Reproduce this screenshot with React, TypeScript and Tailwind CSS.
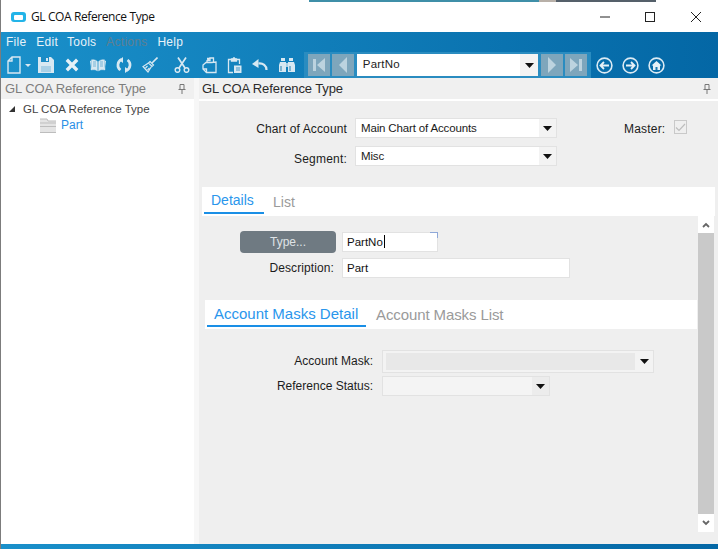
import type { ReactNode } from 'react';

const Caret = () => (
  <svg width="9" height="5" viewBox="0 0 9 5" className="block">
    <path d="M0 0h9L4.5 5z" fill="#111" />
  </svg>
);

const Select = ({ value, className }: { value: string; className: string }) => (
  <div className={`flex h-[20px] items-stretch border border-[#e2e2e2] bg-white ${className}`}>
    <span className="flex-1 pl-[5px] text-[11.5px] leading-[18px] tracking-[-0.15px] text-[#1a1a1a]">{value}</span>
    <span className="flex w-[17px] items-center justify-center bg-[#f3f3f3]">
      <Caret />
    </span>
  </div>
);

const Label = ({ children, className }: { children: ReactNode; className: string }) => (
  <span className={`text-right text-[12px] leading-[16px] text-[#1c1c1c] ${className}`}>{children}</span>
);

const Tool = ({ children, className }: { children: ReactNode; className: string }) => (
  <span className={`flex h-[26px] items-center justify-center ${className}`}>{children}</span>
);

const NavButton = ({ children }: { children: ReactNode }) => (
  <span className="flex h-[22px] w-[22px] items-center justify-center bg-[#7ea6bc]">{children}</span>
);

const CircleIcon = ({ children }: { children: ReactNode }) => (
  <svg width="17" height="17" viewBox="0 0 17 17" className="block">
    <circle cx="8.5" cy="8.5" r="7.4" fill="none" stroke="#dcebf4" strokeWidth="1.6" />
    {children}
  </svg>
);

const c = '#d7e8f2';

export default function App() {
  return (
    <div className="flex h-[549px] w-[718px] flex-col overflow-hidden border-l border-[#7c7c7c] bg-white font-['Liberation_Sans',Arial,sans-serif]">
      {/* sliver of whatever sits behind the window */}
      <div className="flex h-[2px] bg-white">
        <span className="ml-[308px] w-[230px] bg-[#3f8fa8]" />
        <span className="w-[17px] bg-[#b8b0a8]" />
        <span className="w-[100px] bg-[#55606a]" />
      </div>

      {/* title bar */}
      <div className="flex h-[30px] items-center">
        <span className="ml-[10px] flex h-[10px] w-[15px] items-center justify-center rounded-[3px] bg-[#23b4e8]">
          <span className="h-[5px] w-[9px] rounded-[1px] bg-white" />
        </span>
        <span className="ml-[5px] font-['Open_Sans',sans-serif] text-[12px] tracking-[-0.4px] text-[#111]">GL COA Reference Type</span>
        <span className="ml-auto flex items-center">
          <svg width="10" height="2" className="mr-[35px]"><path d="M0 1h10" stroke="#222" /></svg>
          <svg width="10" height="10" className="mr-[35px]"><rect x=".5" y=".5" width="9" height="9" fill="none" stroke="#222" /></svg>
          <svg width="12" height="12" className="mr-[16px]"><path d="M1 1l10 10M11 1L1 11" stroke="#222" /></svg>
        </span>
      </div>

      {/* menu + toolbar */}
      <div className="h-[46px] bg-gradient-to-r from-[#1a90ca] to-[#0467a5]">
        <div className="flex h-[20px] items-center pl-[5px] text-[12px] tracking-[0.25px] text-[#e8f2f8]">
          <span>File</span>
          <span className="ml-[10px]">Edit</span>
          <span className="ml-[9px]">Tools</span>
          <span className="ml-[10px] text-[#5f7f92]">Actions</span>
          <span className="ml-[10px]">Help</span>
        </div>
        <div className="flex h-[26px] items-center">
          <Tool className="ml-[4px] w-[18px]">
            <svg width="14" height="18" viewBox="0 0 14 18"><path d="M5 1h8v16H1V5z M5 1v4H1" fill="none" stroke={c} strokeWidth="1.4" /></svg>
          </Tool>
          <Tool className="w-[10px]">
            <svg width="6" height="3"><path d="M0 0h6L3 3z" fill={c} /></svg>
          </Tool>
          <Tool className="w-[26px]">
            <svg width="16" height="16" viewBox="0 0 16 16"><path d="M0 0h13l3 3v13H0z" fill={c} /><path d="M3 0h8v5H3z" fill="#1a8ac4" /><path d="M8 1h2v3H8z" fill={c} /><path d="M3 9h10v6H3z" fill="#a9d0e6" /></svg>
          </Tool>
          <Tool className="w-[26px]">
            <svg width="14" height="14" viewBox="0 0 14 14"><path d="M1.8 1.8l10.4 10.4M12.2 1.8L1.8 12.2" stroke="#e6f1f7" strokeWidth="3.4" /></svg>
          </Tool>
          <Tool className="w-[26px]">
            <svg width="16" height="13" viewBox="0 0 16 13"><path d="M0 2h1v9c3-.6 5-.3 6.400 1V2.500C6 .8 3 .4 1.500.8V10M16 2h-1v9c-3-.6-5-.3-6.400 1V2.500C10 .8 13 .4 14.500.8V10" fill={c} stroke={c} strokeWidth=".4" /><path d="M3 3h3M3 5h3M3 7h3M10 3h3M10 5h3M10 7h3" stroke="#4a9fcb" strokeWidth=".7" /></svg>
          </Tool>
          <Tool className="w-[26px]">
            <svg width="16" height="16" viewBox="0 0 16 16" fill="none" stroke={c} strokeWidth="2.700"><path d="M5.500 2.600A6 6 0 0 0 4.500 13" /><path d="M10.500 13.400A6 6 0 0 0 11.500 3" /><path d="M7 0v6L3 3z M9 16v-6l4 3z" fill={c} stroke="none" /></svg>
          </Tool>
          <Tool className="w-[26px]">
            <svg width="16" height="16" viewBox="0 0 16 16" fill="none" stroke={c} strokeWidth="1.200"><path d="M15.500.5L10 6" strokeWidth="1.600" /><path d="M8 4.500l3.500 3.500-1.500 1.500-3.500-3.500z" /><path d="M6.500 6L1 9.500 6 15l3.500-5.500" /><path d="M3.500 11l2-2M5.500 13l2-2" /></svg>
          </Tool>
          <Tool className="ml-[6px] w-[26px]">
            <svg width="16" height="16" viewBox="0 0 16 16" fill="none" stroke={c} strokeWidth="1.500"><circle cx="3.500" cy="13" r="2.300" /><circle cx="12.500" cy="13" r="2.300" /><path d="M5 11L12 .5M11 11L4 .5" strokeWidth="1.700" /></svg>
          </Tool>
          <Tool className="ml-[1px] w-[26px]">
            <svg width="15" height="17" viewBox="0 0 15 17" fill="none" stroke={c} strokeWidth="1.300"><path d="M5 5V3.500L8 1h3.500v4" /><path d="M5 1.500h3M8 1v2.500H5" /><path d="M4 5.500H9.500L14 5v10.500H4.500L1 12V8z" /><path d="M1 12h3.500v3.500" /></svg>
          </Tool>
          <Tool className="w-[25px]">
            <svg width="15" height="17" viewBox="0 0 15 17" fill="none" stroke={c} strokeWidth="1.300"><path d="M4 2.500H1.500v13H6M10 2.500h2.500V7" /><path d="M4.500 4V1.800H6L7 .7l1 1.100h1.500V4z" fill={c} /><path d="M7 8.500h7.500v7.500H7z" fill={c} stroke="none" /><path d="M9 11h4M9 13h4" stroke="#1a80bb" strokeWidth=".8" /></svg>
          </Tool>
          <Tool className="w-[26px]">
            <svg width="16" height="12" viewBox="0 0 16 12" fill="none" stroke={c}><path d="M14.500 11C14.500 6.500 11 4 6.500 4.500" strokeWidth="2.200" /><path d="M0 5l6.500-5v9z" fill={c} stroke="none" /></svg>
          </Tool>
          <Tool className="ml-[1px] w-[26px]">
            <svg width="16" height="16" viewBox="0 0 16 16"><path d="M2 1h4v3H2zM10 1h4v3h-4z" fill={c} /><path d="M1 5h6v10H0V8zM9 5h6l1 3v7H9z" fill={c} /><path d="M7 6h2v4H7z" fill="#a9d0e6" /><path d="M2 9v5M11 9v5" stroke="#2680b0" strokeWidth="1" /></svg>
          </Tool>

          {/* record navigator */}
          <div className="ml-[4px] flex h-[26px] w-[287px] items-center gap-[2px] bg-[#2a8cc0] px-[4px]">
            <NavButton>
              <svg width="14" height="14" viewBox="0 0 14 14"><path d="M1 1h3v12H1zM13 0v14L5 7z" fill="#bcd3df" /></svg>
            </NavButton>
            <NavButton>
              <svg width="10" height="16" viewBox="0 0 10 16"><path d="M9 0v16L1 8z" fill="#bcd3df" /></svg>
            </NavButton>
            <div className="ml-[1px] mr-[1px] flex h-[22px] w-[182px] items-stretch bg-white">
              <span className="flex-1 pl-[6px] text-[11.5px] leading-[21px] tracking-[0.2px] text-[#222]">PartNo</span>
              <span className="flex w-[18px] items-center justify-center bg-[#f3f3f3]"><Caret /></span>
            </div>
            <NavButton>
              <svg width="10" height="16" viewBox="0 0 10 16"><path d="M1 0v16l8-8z" fill="#bcd3df" /></svg>
            </NavButton>
            <NavButton>
              <svg width="14" height="14" viewBox="0 0 14 14"><path d="M10 1h3v12h-3zM1 0v14l8-7z" fill="#bcd3df" /></svg>
            </NavButton>
          </div>
          <span className="ml-[5px] flex items-center gap-[9px]">
            <CircleIcon><path d="M4 8.500h9M8 5L4.500 8.500 8 12" fill="none" stroke="#e6f1f7" strokeWidth="1.800" /></CircleIcon>
            <CircleIcon><path d="M13 8.500H4M9 5l3.500 3.500L9 12" fill="none" stroke="#e6f1f7" strokeWidth="1.800" /></CircleIcon>
            <CircleIcon><path d="M3.500 8.500l5-4.500 5 4.500h-1.500V13H5V8.500z" fill="#e6f1f7" /><path d="M7.500 10h2v3h-2z" fill="#1a78b0" /></CircleIcon>
          </span>
        </div>
      </div>

      <div className="flex flex-1">
        {/* tree panel */}
        <div className="w-[193px] bg-white">
          <div className="flex h-[21px] items-center bg-[#f0f0f0] pl-[4px] pr-[8px]">
            <span className="text-[13px] leading-[21px] tracking-[-0.1px] text-[#7d7d7d]">GL COA Reference Type</span>
            <PinIcon />
          </div>
          <div className="flex items-center pl-[8px] pt-[2px]">
            <svg width="6" height="6" viewBox="0 0 6 6"><path d="M6 0v6H0z" fill="#333" /></svg>
            <span className="ml-[8px] text-[11.5px] leading-[16px] text-[#444]">GL COA Reference Type</span>
          </div>
          <div className="flex items-center pl-[39px]">
            <svg width="16" height="15" viewBox="0 0 16 15">
              <path d="M0 1h7l1 2h8v12H0z" fill="#e4e4e4" />
              <path d="M0 1h7l1 2h8M0 5h16M0 8.500h16M0 14.500h16" stroke="#bdbdbd" fill="none" />
            </svg>
            <span className="ml-[5px] text-[12px] leading-[16px] text-[#2a8fe6]">Part</span>
          </div>
        </div>
        <div className="w-[5px] bg-[#f7f7f7]" />

        {/* main area */}
        <div className="flex flex-1 flex-col bg-[#efefef]">
          <div className="flex h-[21px] items-center justify-between bg-[#f0f0f0] pl-[3px] pr-[7px]">
            <span className="text-[13px] leading-[21px] tracking-[-0.1px] text-[#2b2b2b]">GL COA Reference Type</span>
            <PinIcon />
          </div>
          <div className="h-[2px] bg-white" />

          <div className="mt-[17px] flex items-start">
            <Label className="mt-[3px] w-[148px] tracking-[0.13px]">Chart of Account</Label>
            <Select value="Main Chart of Accounts" className="ml-[8px] w-[202px]" />
            <Label className="ml-[67px] mt-[3px] w-[40px] tracking-[0.2px]">Master:</Label>
            <span className="ml-[10px] mt-[2px] flex h-[14px] w-[13px] items-center justify-center border border-[#c9c9c9]">
              <svg width="11" height="9" viewBox="0 0 11 9"><path d="M1 4.500L4 7.500 10 1" fill="none" stroke="#bdbdbd" strokeWidth="1.200" /></svg>
            </span>
          </div>
          <div className="mt-[8px] flex items-start">
            <Label className="mt-[5px] -mb-[1px] w-[148px] tracking-[0.2px]">Segment:</Label>
            <Select value="Misc" className="ml-[8px] w-[202px]" />
          </div>

          {/* Details / List */}
          <div className="ml-[3px] mr-[3px] mt-[21px] flex h-[29px] items-end bg-white">
            <span className="ml-[2px] mb-[2px] w-[60px] border-b-[2px] border-[#1a8fe6] pb-[3px] pl-[7px] text-[14px] leading-[18px] text-[#2a96ec]">Details</span>
            <span className="ml-[9px] mb-[5px] text-[14px] leading-[18px] text-[#9a9a9a]">List</span>
          </div>

          <div className="flex flex-1">
            <div className="w-[499px] flex-none">
              <div className="mt-[15px] flex items-center">
                <button className="ml-[41px] h-[22px] w-[96px] rounded-[4px] bg-[#6f7a82] text-[12px] text-[#dfe3e6]">Type...</button>
                <div className="relative ml-[6px] h-[20px] w-[96px] border border-[#e2e2e2] bg-white pl-[4px] text-[11.5px] leading-[18px] text-[#111]">
                  PartNo<span className="ml-[1px] inline-block h-[13px] w-px translate-y-[2px] bg-black" />
                  <span className="absolute -right-px -top-px h-[6px] w-[8px] border-r border-t border-[#8fa8d8]" />
                </div>
              </div>
              <div className="mt-[5px] flex items-center">
                <Label className="w-[135px] tracking-[0.1px]">Description:</Label>
                <div className="ml-[8px] h-[20px] w-[228px] border border-[#e2e2e2] bg-white pl-[4px] text-[11.5px] leading-[18px] text-[#111]">Part</div>
              </div>

              {/* Account masks tabs */}
              <div className="ml-[6px] mt-[22px] flex h-[29px] w-[492px] items-end bg-white">
                <span className="ml-[2px] mb-[2px] w-[159px] border-b-[2px] border-[#1a8fe6] pb-[2px] pl-[7px] text-[15px] leading-[18px] text-[#2a96ec]">Account Masks Detail</span>
                <span className="ml-[10px] mb-[5px] text-[15px] leading-[18px] tracking-[-0.1px] text-[#9a9a9a]">Account Masks List</span>
              </div>

              <div className="mt-[21px] flex items-center">
                <Label className="mb-[2px] w-[174px]">Account Mask:</Label>
                <div className="ml-[9px] flex h-[23px] w-[272px] items-stretch border border-[#e2e2e2] bg-[#f3f3f3]">
                  <span className="my-[2px] ml-[3px] flex-1 bg-[#e8e8e8]" />
                  <span className="flex w-[18px] items-center justify-center"><Caret /></span>
                </div>
              </div>
              <div className="mt-[3px] flex items-center">
                <Label className="w-[174px]">Reference Status:</Label>
                <div className="ml-[9px] flex h-[20px] w-[168px] items-stretch border border-[#e2e2e2] bg-[#f4f4f4]">
                  <span className="flex-1" />
                  <span className="flex w-[17px] items-center justify-center bg-[#ececec]"><Caret /></span>
                </div>
              </div>
            </div>

            {/* scrollbar */}
            <div className="flex h-[316px] w-[16px] flex-col bg-white">
              <span className="flex h-[17px] items-center justify-center">
                <svg width="8" height="6" viewBox="0 0 8 6"><path d="M1 5l3-3 3 3" fill="none" stroke="#666" strokeWidth="1.800" /></svg>
              </span>
              <span className="h-[281px] bg-[#c9c9c9]" />
              <span className="flex h-[18px] items-center justify-center">
                <svg width="8" height="6" viewBox="0 0 8 6"><path d="M1 1l3 3 3-3" fill="none" stroke="#666" strokeWidth="1.800" /></svg>
              </span>
            </div>
          </div>
        </div>
      </div>

      <div className="h-[5px] bg-gradient-to-r from-[#1a90ca] to-[#0467a5]" />
    </div>
  );
}

function PinIcon() {
  return (
    <svg width="8" height="10" viewBox="0 0 8 10" className="ml-auto">
      <path d="M2 .5h4v5H2zM.5 5.500h7M4 6v4" fill="none" stroke="#777" />
    </svg>
  );
}
